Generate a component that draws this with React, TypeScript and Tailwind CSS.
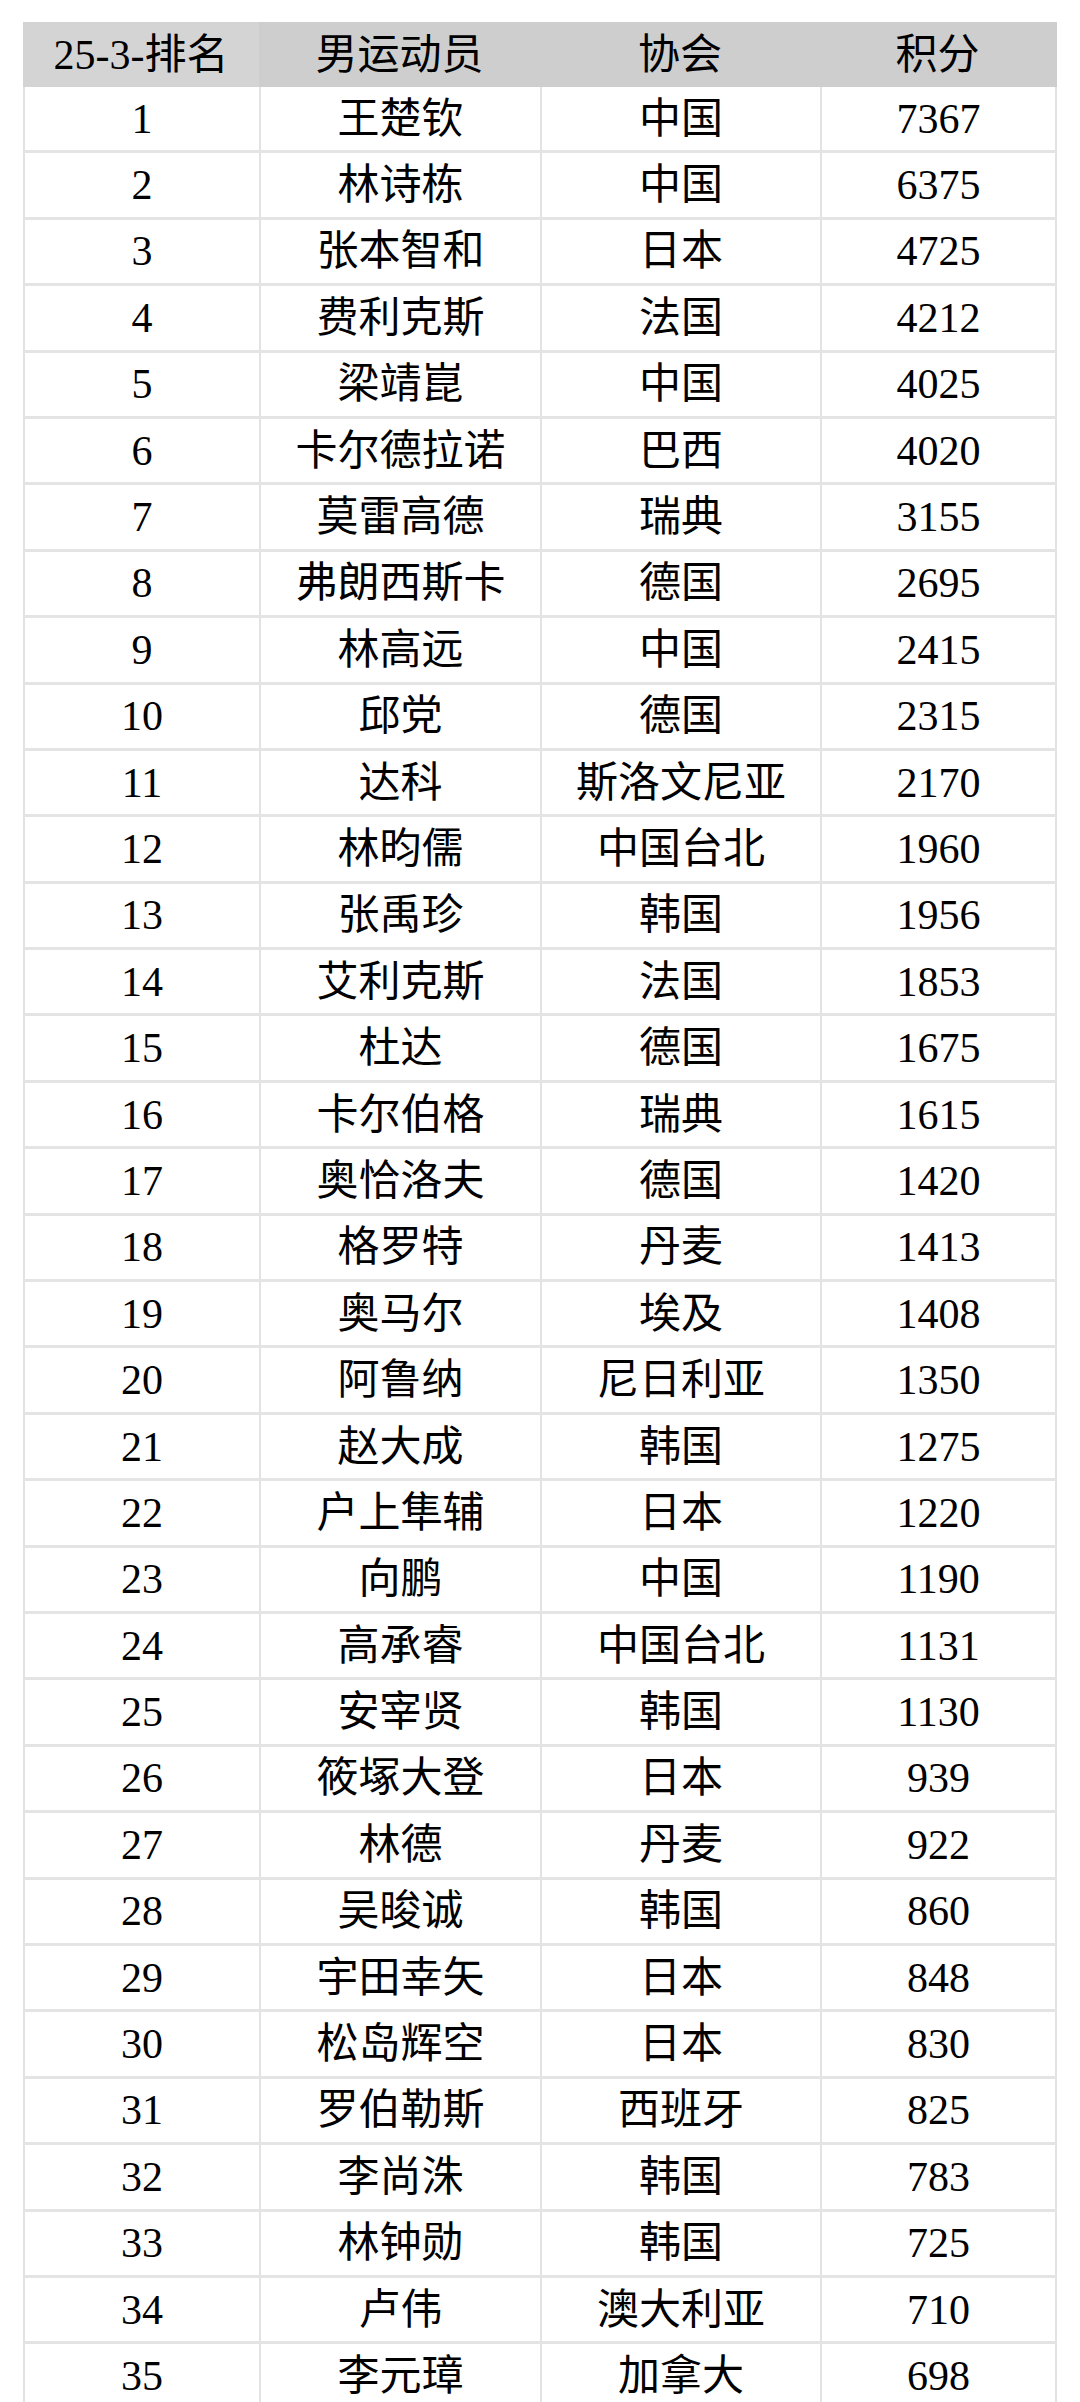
import React from 'react'

type Row = [number, string, string, number]

const rows: Row[] = [
  [1, '王楚钦', '中国', 7367],
  [2, '林诗栋', '中国', 6375],
  [3, '张本智和', '日本', 4725],
  [4, '费利克斯', '法国', 4212],
  [5, '梁靖崑', '中国', 4025],
  [6, '卡尔德拉诺', '巴西', 4020],
  [7, '莫雷高德', '瑞典', 3155],
  [8, '弗朗西斯卡', '德国', 2695],
  [9, '林高远', '中国', 2415],
  [10, '邱党', '德国', 2315],
  [11, '达科', '斯洛文尼亚', 2170],
  [12, '林昀儒', '中国台北', 1960],
  [13, '张禹珍', '韩国', 1956],
  [14, '艾利克斯', '法国', 1853],
  [15, '杜达', '德国', 1675],
  [16, '卡尔伯格', '瑞典', 1615],
  [17, '奥恰洛夫', '德国', 1420],
  [18, '格罗特', '丹麦', 1413],
  [19, '奥马尔', '埃及', 1408],
  [20, '阿鲁纳', '尼日利亚', 1350],
  [21, '赵大成', '韩国', 1275],
  [22, '户上隼辅', '日本', 1220],
  [23, '向鹏', '中国', 1190],
  [24, '高承睿', '中国台北', 1131],
  [25, '安宰贤', '韩国', 1130],
  [26, '筱塚大登', '日本', 939],
  [27, '林德', '丹麦', 922],
  [28, '吴晙诚', '韩国', 860],
  [29, '宇田幸矢', '日本', 848],
  [30, '松岛辉空', '日本', 830],
  [31, '罗伯勒斯', '西班牙', 825],
  [32, '李尚洙', '韩国', 783],
  [33, '林钟勋', '韩国', 725],
  [34, '卢伟', '澳大利亚', 710],
  [35, '李元璋', '加拿大', 698],
]

const cols = 'grid grid-cols-[236px_281px_280px_235px]'
const cell = 'flex items-center justify-center border-r-2 border-[#e2e2e2]'

export default function App() {
  return (
    <div
      className="min-h-screen w-[1080px] overflow-hidden bg-white pl-[23px] pt-[22px] text-[42px] leading-none text-black"
      style={{ fontFamily: '"Liberation Serif", "Noto Sans CJK SC", serif' }}
    >
      <div className="w-[1034px]">
        <div className={`${cols} h-[65px] bg-[#cecece]`}>
          <div className="flex items-center justify-center bg-[#d4d4d4]">25-3-排名</div>
          <div className="flex items-center justify-center">男运动员</div>
          <div className="flex items-center justify-center">协会</div>
          <div className="flex items-center justify-center">积分</div>
        </div>

        <div className="border-l-2 border-[#e2e2e2]">
          {rows.map(([rank, name, assoc, pts]) => (
            <div key={rank} className={`${cols} h-[66.4px] border-b-[3px] border-[#e4e4e4]`}>
              <div className={cell}>{rank}</div>
              <div className={cell}>{name}</div>
              <div className={cell}>{assoc}</div>
              <div className={cell}>{pts}</div>
            </div>
          ))}
        </div>
      </div>
    </div>
  )
}
